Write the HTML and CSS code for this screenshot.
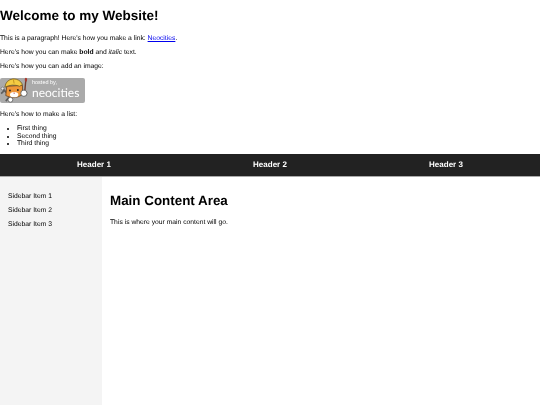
FILE: index.html
```html
<!DOCTYPE html>
<html>
<head>
    <link rel="stylesheet" href="styles.css">
    <title>My Website</title>
</head>
<body>
    <div class="intro">
        <h1>Welcome to my Website!</h1>
        <p>This is a paragraph! Here's how you make a link: <a href="#">Neocities</a>.</p>
        <p>Here's how you can make <strong>bold</strong> and <em>italic</em> text.</p>
        <p>Here's how you can add an image:</p>
        <div class="badge">
            <svg class="cat" viewBox="0 0 34 28">
                <!-- wrench -->
                <path d="M2 12 L9 19 M1 18 L4 15 M6 26 L11 20" stroke="#5f5f5f" stroke-width="1.8" fill="none"/>
                <circle cx="2.5" cy="12.5" r="1.6" fill="#e8e8e8" stroke="#555" stroke-width="0.6"/>
                <!-- brush -->
                <path d="M27.5 4 L26.5 15" stroke="#6e3a2c" stroke-width="1.5" fill="none"/>
                <ellipse cx="27.7" cy="3" rx="1.3" ry="2.2" fill="#a8392f"/>
                <!-- head -->
                <path d="M7 10 L6 20 Q15 25 24 19 L24 9 Z" fill="#ee9638" stroke="#5c3a1d" stroke-width="0.8"/>
                <!-- hard hat -->
                <path d="M5 11 Q6 3 14 2 Q21 2 24 8 L21 10 Q13 7 5 11 Z" fill="#f4cb43" stroke="#6b5520" stroke-width="0.8"/>
                <path d="M14 2 L15 7" stroke="#c79a24" stroke-width="1.2"/>
                <!-- face -->
                <ellipse cx="15" cy="19" rx="4.5" ry="2.8" fill="#fff"/>
                <circle cx="10.5" cy="14.5" r="1" fill="#222"/>
                <circle cx="19" cy="14" r="1" fill="#222"/>
                <path d="M14 17 L16 17 L15 18.2 Z" fill="#a33"/>
                <!-- paws -->
                <circle cx="25.5" cy="17.5" r="3.4" fill="#fff" stroke="#444" stroke-width="0.8"/>
                <circle cx="11" cy="24.5" r="2.6" fill="#fff" stroke="#444" stroke-width="0.7"/>
            </svg>
            <span class="badge-text"><span class="hosted">hosted by,</span><span class="brand">neocities</span></span>
        </div>
        <p>Here's how to make a list:</p>
        <ul>
            <li>First thing</li>
            <li>Second thing</li>
            <li>Third thing</li>
        </ul>
    </div>
    <div class="header">
        <div>Header 1</div>
        <div>Header 2</div>
        <div>Header 3</div>
    </div>
    <div class="layout">
        <div class="sidebar">
            <p>Sidebar Item 1</p>
            <p>Sidebar Item 2</p>
            <p>Sidebar Item 3</p>
        </div>
        <div class="main">
            <h2>Main Content Area</h2>
            <p>This is where your main content will go.</p>
        </div>
    </div>
</body>
</html>
```
FILE: styles.css
```css
html, body {
    height: 100%;
}
body {
    font-family: "Liberation Sans", Arial, sans-serif;
    font-size: 6.75px;
    line-height: 7.5px;
    margin: 0;
    background-color: white;
    color: #000;
    display: flex;
    flex-direction: column;
    filter: blur(0.3px);
    text-rendering: geometricPrecision;
}
h1 {
    font-size: 13.5px;
    line-height: 16px;
    margin: 8px 0 10.5px;
}
p {
    margin: 0 0 6.9px;
}
a {
    color: #0000ee;
}
.badge {
    width: 85px;
    height: 25.5px;
    background-color: #aaa;
    border-radius: 2px;
    display: flex;
    align-items: center;
    margin-bottom: 7.5px;
}
.cat {
    width: 32px;
    height: 26px;
    flex: none;
}
.badge-text {
    display: flex;
    flex-direction: column;
    color: #fff;
}
.hosted {
    font-size: 5.5px;
    line-height: 6.3px;
}
.brand {
    font-family: Lato, sans-serif;
    font-size: 12px;
    line-height: 14.4px;
}
ul {
    margin: 0 0 6px;
    padding-left: 17px;
}
.header {
    background-color: #222;
    color: white;
    font-weight: bold;
    font-size: 8px;
    height: 22px;
    padding: 0 6px;
    display: flex;
    align-items: center;
    border-bottom: 1px solid #aaa;
}
.header div {
    flex: 1;
    text-align: center;
}
.layout {
    flex: 1;
    display: flex;
}
.sidebar {
    width: 94px;
    padding: 16px 0 0 8px;
    background-color: #f4f4f4;
}
.main {
    padding: 0 0 0 8px;
}
h2 {
    font-size: 13.4px;
    line-height: 16px;
    margin: 16.5px 0 10px;
}
```
